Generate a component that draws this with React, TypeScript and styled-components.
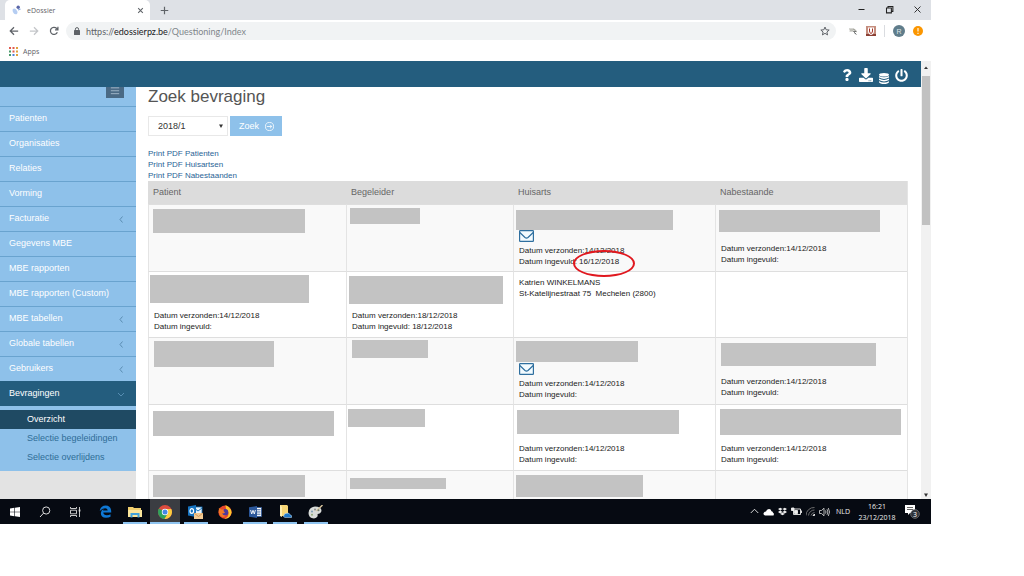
import React from "react";
import styled, { createGlobalStyle } from "styled-components";
import { FaDownload, FaPowerOff, FaQuestion, FaDropbox } from "react-icons/fa";

const GlobalStyle = createGlobalStyle`
  * { box-sizing: border-box; }
  body { margin: 0; background: #fff; font-family: "Liberation Sans", Arial, sans-serif; font-size: 8px; line-height: 11px; color: #333; }
  button, select, input { font: inherit; border: 0; padding: 0; margin: 0; background: none; color: inherit; }
  a { text-decoration: none; color: inherit; }
  ul { list-style: none; margin: 0; padding: 0; }
  svg { display: block; flex: none; }
`;

const ui = `"Open Sans", "Noto Sans", sans-serif`;

const Page = styled.div`
  height: 100vh;
  padding: 0 93px 52px 0;
`;
const Desktop = styled.div`
  height: 100%;
  display: flex;
  flex-direction: column;
  overflow: hidden;
`;

/* Browser chrome */
const TabStrip = styled.div`
  display: flex;
  align-items: stretch;
  height: 20px;
  flex: none;
  background: #dee1e6;
  font-family: ${ui};
  color: #5f6368;
`;
const Tab = styled.div`
  display: flex;
  align-items: center;
  gap: 5px;
  width: 145px;
  margin-left: 5px;
  padding: 0 6px 0 7px;
  border-radius: 5px 5px 0 0;
  background: #fff;
  font-size: 7px;
`;
const TabTitle = styled.span`
  flex: 1;
`;
const IconButton = styled.button`
  display: flex;
  align-items: center;
  justify-content: center;
  cursor: pointer;
`;
const NewTab = styled(IconButton)`
  width: 28px;
`;
const WindowButtons = styled.div`
  display: flex;
  margin-left: auto;
`;
const WindowButton = styled(IconButton)`
  width: 28px;
  padding-bottom: 2px;
  color: #222;
`;
const Toolbar = styled.div`
  display: flex;
  align-items: center;
  height: 22px;
  flex: none;
  padding: 0 8px 0 4px;
  background: #fff;
  color: #5f6368;
`;
const NavButton = styled(IconButton)`
  width: 20px;
  height: 20px;
`;
const AddressBar = styled.div`
  display: flex;
  align-items: center;
  flex: 1;
  gap: 6px;
  height: 18px;
  margin: 0 12px 0 2px;
  padding: 0 6px 0 8px;
  border-radius: 9px;
  background: #f1f3f4;
  font-family: Lato, ${ui};
  font-size: 9px;
`;
const Url = styled.span`
  flex: 1;
  color: #80868b;
`;
const Host = styled.span`
  color: #202124;
`;
const Scheme = styled.span`
  color: #5f6368;
`;
const Extensions = styled.div`
  display: flex;
  align-items: center;
  gap: 8px;
`;
const Divider = styled.span`
  width: 1px;
  height: 12px;
  background: #dadce0;
`;
const Avatar = styled(IconButton)`
  width: 12px;
  height: 12px;
  border-radius: 50%;
  background: #607d8b;
  color: #dfe6e9;
  font-size: 7px;
`;
const Bookmarks = styled.div`
  display: flex;
  align-items: center;
  height: 19px;
  flex: none;
  padding-left: 9px;
  background: #fff;
  color: #5f6368;
  font-family: ${ui};
  font-size: 7px;
`;
const Bookmark = styled.a`
  display: flex;
  align-items: center;
  gap: 5px;
`;

/* Web application */
const Viewport = styled.div`
  display: flex;
  flex: 1;
  min-height: 0;
`;
const Application = styled.div`
  display: flex;
  flex-direction: column;
  flex: 1;
  min-width: 0;
`;
const AppBar = styled.header`
  display: flex;
  align-items: center;
  justify-content: flex-end;
  gap: 6px;
  height: 26px;
  flex: none;
  padding: 2px 13px 0 0;
  background: #245d7e;
  color: #fff;
`;
const AppBody = styled.div`
  display: flex;
  flex: 1;
  min-height: 0;
  overflow: hidden;
`;
const SideColumn = styled.aside`
  width: 136px;
  flex: none;
  background: #e3e3e3;
`;
const Menu = styled.nav`
  background: #8ec1ea;
  padding-bottom: 4px;
  font-size: 9px;
`;
const MenuTop = styled.div`
  display: flex;
  justify-content: flex-end;
  height: 19px;
  padding-right: 12px;
`;
const MenuToggle = styled.button`
  display: flex;
  justify-content: center;
  width: 18px;
  height: 11px;
  background: #4a6a85;
  color: #9db3c5;
`;
const MenuLink = styled.a<{ $active?: boolean }>`
  display: flex;
  align-items: center;
  justify-content: space-between;
  height: 25px;
  padding: 0 10px 1px 9px;
  border-top: 1px solid ${(p) => (p.$active ? "#245d7e" : "#69a3cf")};
  background: ${(p) => (p.$active ? "#245d7e" : "transparent")};
  color: #fff;
`;
const SubMenu = styled.ul`
  padding-top: 4px;
`;
const SubLink = styled.a<{ $active?: boolean }>`
  display: flex;
  align-items: center;
  height: 19px;
  padding-left: 27px;
  background: ${(p) => (p.$active ? "#1f4a63" : "transparent")};
  color: ${(p) => (p.$active ? "#fff" : "#2f6d97")};
`;
const Main = styled.main`
  flex: 1;
  min-width: 0;
  padding: 0 13px 0 12px;
  background: #fff;
`;
const Title = styled.h1`
  margin: 0 0 9px;
  font-size: 17px;
  line-height: 20px;
  font-weight: normal;
  color: #555;
`;
const Filter = styled.form`
  display: flex;
  gap: 2px;
  height: 20px;
  margin-bottom: 12px;
`;
const SelectBox = styled.div`
  display: grid;
  align-items: center;
  width: 80px;
  border: 1px solid #e8e8e8;
  > * { grid-area: 1 / 1; }
  > svg { justify-self: end; margin-right: 4px; pointer-events: none; }
`;
const Select = styled.select`
  appearance: none;
  width: 100%;
  height: 18px;
  padding-left: 9px;
  font-size: 9px;
  color: #333;
`;
const SearchButton = styled.button`
  display: flex;
  align-items: center;
  justify-content: space-between;
  width: 52px;
  padding: 0 8px 0 9px;
  background: #8ec1ea;
  color: #fff;
  font-size: 9px;
`;
const PrintLinks = styled.div`
  display: flex;
  flex-direction: column;
  align-items: flex-start;
  color: #2a6496;
`;
const Table = styled.table`
  width: 100%;
  table-layout: fixed;
  border-collapse: separate;
  border-spacing: 0;
  border-right: 1px solid #e4e4e4;
`;
const Th = styled.th<{ $width: string }>`
  width: ${(p) => p.$width};
  height: 23px;
  padding: 0 5px;
  background: #dcdcdc;
  color: #666;
  text-align: left;
  font-size: 9px;
  font-weight: normal;
`;
const Row = styled.tr`
  height: 66px;
  &:nth-child(odd) { background: #f9f9f9; }
`;
const Td = styled.td`
  position: relative;
  padding: 5px 5px 4px;
  border-top: 1px solid #dedede;
  border-left: 1px solid #e4e4e4;
  vertical-align: top;
  color: #222;
`;
const Line = styled.div`
  height: 11px;
  white-space: pre;
`;
const MailLink = styled.a`
  display: block;
  height: 13px;
  margin: -2px 0 2px;
`;
const Redaction = styled.div<{ $box: Box }>`
  position: absolute;
  left: ${(p) => p.$box[0]}px;
  top: ${(p) => p.$box[1]}px;
  width: ${(p) => p.$box[2]}px;
  height: ${(p) => p.$box[3]}px;
  background: #c3c3c3;
`;
const Marker = styled.div`
  position: absolute;
  z-index: 1;
  left: 59px;
  top: 45px;
  width: 62px;
  height: 27px;
  border: 2px solid #e0181f;
  border-radius: 50%;
`;
const ScrollTrack = styled.div`
  display: flex;
  flex-direction: column;
  align-items: center;
  width: 10px;
  flex: none;
  background: #f1f1f1;
`;
const ScrollArrow = styled(IconButton)`
  width: 10px;
  height: 15px;
  padding-bottom: 2px;
`;
const LastScrollArrow = styled(ScrollArrow)`
  height: 9px;
  padding: 0;
`;
const ScrollThumb = styled.div`
  width: 8px;
  height: 34%;
  margin-bottom: auto;
  background: #c1c1c1;
`;

/* Windows taskbar */
const Taskbar = styled.footer`
  display: flex;
  align-items: stretch;
  height: 25px;
  flex: none;
  background: #060a12;
  color: #eee;
  font-family: ${ui};
  font-size: 7px;
`;
const TaskButton = styled.button<{ $open?: boolean; $focused?: boolean }>`
  display: flex;
  align-items: center;
  justify-content: center;
  width: 30px;
  background: ${(p) => (p.$focused ? "#3b3d42" : "transparent")};
  &::after {
    content: "";
    align-self: flex-end;
    width: ${(p) => (p.$focused ? "30px" : "24px")};
    height: 2px;
    margin-left: ${(p) => (p.$focused ? "-22px" : "-19px")};
    margin-right: ${(p) => (p.$focused ? "-8px" : "-5px")};
    background: ${(p) => (p.$open ? "#8fc4f0" : "transparent")};
  }
`;
const Tray = styled.div`
  display: flex;
  align-items: center;
  gap: 4px;
  margin-left: auto;
  padding-right: 11px;
`;
const Language = styled.span`
  margin: 0 4px 0 2px;
`;
const Clock = styled.time`
  width: 38px;
  margin-right: 5px;
  text-align: center;
`;

const Stroke = ({ d, size = 10, w = 1.2, color = "currentColor", box = 12 }: { d: string; size?: number; w?: number; color?: string; box?: number }) => (
  <svg width={size} height={size} viewBox={`0 0 ${box} ${box}`} fill="none" stroke={color} strokeWidth={w}>
    <path d={d} />
  </svg>
);

const Favicon = () => (
  <svg width="10" height="10" viewBox="0 0 10 10">
    <circle cx="6.2" cy="2.2" r="1.700" fill="#5a66a8" />
    <path d="M.8 4Q3 2.500 4.500 5Q6.500 7 5 9Q3 10 1.500 8Q0 6 .8 4Z" fill="#b5cdf2" />
    <path d="M6 5L8.500 4" stroke="#88a8e0" strokeWidth="1.200" />
  </svg>
);
const Lock = () => (
  <svg width="6" height="8" viewBox="0 0 6 8">
    <rect x="0" y="3" width="6" height="5" rx=".6" fill="#5f6368" />
    <path d="M1.400 3.500V2.200a1.600 1.600 0 0 1 3.200 0V3.500" fill="none" stroke="#5f6368" />
  </svg>
);
const Star = () => (
  <svg width="10" height="10" viewBox="0 0 24 24" fill="none" stroke="#5f6368" strokeWidth="2.400">
    <path d="M12 2.500l2.800 6.600 7.200.6-5.500 4.700 1.700 7L12 17.600l-6.200 3.800 1.700-7L2 9.700l7.200-.6z" />
  </svg>
);
const Hand = () => (
  <svg width="10" height="10" viewBox="0 0 10 10" fill="none" stroke="#a5a59c">
    <path d="M1 3H6L8.500 5M1.500 5H5L8 8M5 3L9 6M2 4H7" strokeWidth=".9" />
    <path d="M6 6.500L8.500 8.500M5.500 5.500H8" stroke="#55585a" strokeWidth=".8" />
  </svg>
);
const Shield = () => (
  <svg width="10" height="10" viewBox="0 0 10 10">
    <rect width="10" height="10" fill="#c58e7e" />
    <path d="M0 8H10V10H0Z" fill="#8c4034" />
    <path d="M2 1.500H8V5Q8 8 5 9Q2 8 2 5Z" fill="#fff" />
    <path d="M3.500 2.500V5Q3.500 7 5 7.500Q6.500 7 6.500 5V2.500" fill="none" stroke="#a33227" />
  </svg>
);
const Alert = () => (
  <svg width="10" height="10" viewBox="0 0 10 10">
    <circle cx="5" cy="5" r="5" fill="#fb9600" />
    <path d="M5 2V5.500M5 6.800V8" stroke="#fff" strokeWidth="1.100" />
  </svg>
);
const AppsGrid = () => {
  const colors = ["#e05a4e", "#e05a4e", "#e0a23a", "#4a9b6a", "#e05a4e", "#e0a23a", "#4a9b6a", "#4a80d8", "#e0a23a"];
  return (
    <svg width="9" height="9" viewBox="0 0 9 9">
      {colors.map((c, i) => (
        <rect key={i} x={(i % 3) * 3.5} y={Math.floor(i / 3) * 3.5} width="2" height="2" fill={c} />
      ))}
    </svg>
  );
};
const Database = () => (
  <svg width="10" height="17" viewBox="0 -6 10 17" fill="#fff">
    <ellipse cx="5" cy="1.800" rx="5" ry="1.800" />
    <path d="M0 3Q5 5.600 10 3V4.500Q5 7.400 0 4.500ZM0 5.600Q5 8.200 10 5.600V7Q5 9.800 0 7ZM0 8.200Q5 10.600 10 8.200V9.200Q9 11 5 11Q1 11 0 9.200Z" />
  </svg>
);
const Envelope = () => (
  <svg width="15" height="12" viewBox="0 0 15 12" fill="none" stroke="#2f6f9f" strokeWidth="1.200">
    <rect x=".6" y=".6" width="13.800" height="10.800" rx=".6" fill="#f3fbff" />
    <path d="M.8 2.500L6 7.500Q7.500 8.700 9 7.500L14.200 2.500" />
  </svg>
);
const ArrowCircle = () => (
  <svg width="9" height="9" viewBox="0 0 10 10" fill="none" stroke="#fff" strokeWidth=".9">
    <circle cx="5" cy="5" r="4.500" />
    <path d="M2 5H7.500M5.500 3L7.500 5L5.500 7" />
  </svg>
);
const Caret = ({ up }: { up?: boolean }) => (
  <svg width="4" height="4" viewBox="0 0 4 4">
    <path d={up ? "M0 3L2 .5L4 3Z" : "M0 .5H4L2 4Z"} fill="#333" />
  </svg>
);

const WindowsLogo = () => (
  <svg width="10" height="10" viewBox="0 0 10 10" fill="#fff">
    <path d="M0 1.400L4.400.8V4.700H0ZM5 .7L10 0V4.700H5ZM0 5.300H4.400V9.200L0 8.600ZM5 5.300H10V10L5 9.300Z" />
  </svg>
);
const SearchGlass = () => (
  <svg width="12" height="12" viewBox="0 0 12 12" fill="none" stroke="#ddd">
    <circle cx="7.200" cy="4.500" r="3.600" />
    <path d="M4.600 7.100L1 11" />
  </svg>
);
const TaskView = () => (
  <svg width="11" height="10" viewBox="0 0 11 10" fill="none" stroke="#ddd" strokeWidth=".9">
    <path d="M.5 0V1.500H6.500V0M.5 10V8.500H6.500V10M.5 3.200H6.500V6.800H.5ZM9.500 0V10" />
    <path d="M8.700 3.500H10.400" strokeWidth="2" />
  </svg>
);
const Edge = () => (
  <svg width="13" height="13" viewBox="0 0 13 13">
    <path d="M.8 6Q1.500 .5 6.800 .5Q12.300 .8 12.300 7.500H4.300Q4.600 10.300 7.800 10.300Q10 10.300 11.500 9.300V11.700Q9.800 12.800 7 12.800Q1.800 12.500 1.800 8Q2 5 4.800 3.700Q4 4.500 4 5.600H8.700Q8.600 3.200 6.200 3.200Q3 3.200 .8 6Z" fill="#0f78d4" />
  </svg>
);
const Folder = () => (
  <svg width="14" height="12" viewBox="0 0 14 12">
    <path d="M0 1H5L6 2H13V11H0Z" fill="#f1cf6e" />
    <path d="M0 4H14V11H0Z" fill="#fbe69c" />
    <path d="M2.500 11.500V7H11.500V11.500H9.500V9H4.500V11.500Z" fill="#41a3dc" />
  </svg>
);
const Chrome = () => (
  <svg width="14" height="14" viewBox="0 0 14 14">
    <circle cx="7" cy="7" r="7" fill="#dd4b3e" />
    <path d="M7 7L.9 3.600A7 7 0 0 0 6.500 14L10 8.500Z" fill="#2da25b" />
    <path d="M7 4H13.300A7 7 0 0 1 6.500 14L9.700 8.500Z" fill="#fbcd3f" />
    <circle cx="7" cy="7" r="3.200" fill="#fff" />
    <circle cx="7" cy="7" r="2.500" fill="#4587e6" />
  </svg>
);
const Outlook = () => (
  <svg width="15" height="14" viewBox="0 0 15 14">
    <rect x="6" y="2" width="8" height="7" fill="#e9f3fb" stroke="#1976bd" strokeWidth=".8" />
    <path d="M6 3L10 6L14 3" fill="none" stroke="#1976bd" />
    <path d="M0 1.500L8 0V12L0 10.500Z" fill="#1573c0" />
    <ellipse cx="3.800" cy="6" rx="1.800" ry="2.300" fill="none" stroke="#fff" strokeWidth="1.200" />
    <path d="M6 8H15V14H6Z" fill="#f3ca92" />
    <path d="M6 8L10.500 11.500L15 8" fill="none" stroke="#c88a4c" strokeWidth=".8" />
  </svg>
);
const Firefox = () => (
  <svg width="14" height="14" viewBox="0 0 14 14">
    <circle cx="7" cy="7.200" r="6.600" fill="#e8452c" />
    <path d="M7.500 0Q14 3 13.500 8Q12 14 6.500 13.600Q11 12 10.500 8Q10 5 8 4Z" fill="#ffc52e" />
    <circle cx="7" cy="7.300" r="3.300" fill="#503a9c" />
    <path d="M1 3L3.500 4.500L6 4.200L5.500 6L7 7.500Q5.500 9 3.800 8.300Q5 11 8.500 10.600Q5 13.500 2 10.500Q0 7 1 3Z" fill="#f47a25" />
  </svg>
);
const Word = () => (
  <svg width="13" height="12" viewBox="0 0 13 12">
    <path d="M6 1.500H12.500V10.500H6Z" fill="#fff" stroke="#2b579a" strokeWidth=".8" />
    <path d="M8 3.500H11.500M8 5.200H11.500M8 6.900H11.500M8 8.600H11.500" stroke="#2b579a" strokeWidth=".7" />
    <path d="M0 1.300L8 0V12L0 10.700Z" fill="#2b579a" />
    <path d="M1.600 4L2.700 8L4 4.300L5.300 8L6.400 4" fill="none" stroke="#fff" strokeWidth=".9" />
  </svg>
);
const CloudFolder = () => (
  <svg width="13" height="13" viewBox="0 0 13 13">
    <path d="M1 0H8L9 1V11H1Z" fill="#f7d676" />
    <path d="M1 0L3 2V12L1 11Z" fill="#fdeeb0" />
    <path d="M6 12.500Q3.500 12 5 10Q5.500 8 8 8.300Q10.500 7.500 11 9.800Q13.500 10.300 12.500 12.500Z" fill="#1f78c8" stroke="#cfe6f8" strokeWidth=".5" />
  </svg>
);
const Paint = () => (
  <svg width="15" height="14" viewBox="0 0 15 14">
    <path d="M.5 8Q.5 2.500 7 1.500Q13.500 1.500 13.500 6Q12.500 9 9.500 9Q10.500 12.500 6 13.500Q.5 13 .5 8Z" fill="#d9dcd9" />
    <path d="M14.500 0L8.500 6" stroke="#d9c49c" strokeWidth="1.400" />
    <circle cx="4" cy="6.500" r="1" fill="#7b9cb5" />
    <circle cx="7" cy="4.500" r="1" fill="#8b8b8b" />
    <circle cx="4" cy="9.800" r="1" fill="#8fa877" />
    <circle cx="10.500" cy="5.200" r="1" fill="#6f7f73" />
  </svg>
);
const CloudTray = () => (
  <svg width="11" height="8" viewBox="0 0 11 8" fill="#fff">
    <path d="M2 7.500Q-.5 6.500 1 4.500Q1.600 3.500 3 3.500Q3.500 1 6 1Q8 1 8.500 3.200Q10 3.200 10 4.700Q11.500 5.500 10.500 7.500Z" />
  </svg>
);
const Battery = () => (
  <svg width="11" height="9" viewBox="0 0 11 9" fill="none" stroke="#eee" strokeWidth=".9">
    <path d="M2.500 2H9.500V7.500H2.500ZM10.500 3.500V6" />
    <path d="M.5 1H3V3.500H.5ZM3.500 3.500H6.500V6.500H3.500Z" fill="#eee" />
  </svg>
);
const Wifi = () => (
  <svg width="9" height="9" viewBox="0 0 9 9" fill="none" stroke="#777" strokeWidth=".9">
    <path d="M0 8.500A8 8 0 0 1 8.500 .5M2.500 8.500A6 6 0 0 1 8.500 3M5 8.500A4 4 0 0 1 8.500 5.500" />
    <path d="M7 8.500L8.500 7V8.500Z" fill="#eee" stroke="#eee" />
  </svg>
);
const Speaker = () => (
  <svg width="11" height="10" viewBox="0 0 11 10" fill="none" stroke="#ddd" strokeWidth=".8">
    <path d="M.5 3.500H2.500L5 1.200V8.800L2.500 6.500H.5ZM6.500 3.500Q7.500 5 6.500 6.500M8 2.200Q9.800 5 8 7.800M9.300 1Q11.800 5 9.300 9" />
  </svg>
);
const Notifications = () => (
  <svg width="15" height="15" viewBox="0 0 15 15">
    <path d="M0 1H10V9H5L3 11V9H0Z" fill="#fff" />
    <path d="M2 3.500H8M2 5.500H8" stroke="#222" strokeWidth=".7" />
    <circle cx="10" cy="10" r="4.400" fill="#30343a" stroke="#888" strokeWidth=".6" />
    <text x="10" y="12.500" fontSize="7" textAnchor="middle" fill="#fff">3</text>
  </svg>
);

type Box = [number, number, number, number];
interface CellData {
  box?: Box;
  hidden?: number;
  mail?: boolean;
  lines?: string[];
  marked?: boolean;
}

const sent = "Datum verzonden:14/12/2018";
const filled = "Datum ingevuld:";

const rows: CellData[][] = [
  [
    { box: [4, 4, 152, 24] },
    { box: [3, 3, 70, 16] },
    { box: [2, 5, 157, 20], hidden: 2, mail: true, lines: [sent, "Datum ingevuld: 16/12/2018"], marked: true },
    { box: [3, 5, 161, 22], hidden: 3, lines: [sent, filled] },
  ],
  [
    { box: [1, 3, 159, 28], hidden: 3, lines: [sent, filled] },
    { box: [2, 4, 154, 28], hidden: 3, lines: ["Datum verzonden:18/12/2018", "Datum ingevuld: 18/12/2018"] },
    { lines: ["Katrien WINKELMANS", "St-Katelijnestraat 75  Mechelen (2800)"] },
    {},
  ],
  [
    { box: [5, 3, 120, 26] },
    { box: [5, 2, 76, 18] },
    { box: [2, 3, 122, 21], hidden: 2, mail: true, lines: [sent, filled] },
    { box: [5, 5, 155, 23], hidden: 3, lines: [sent, filled] },
  ],
  [
    { box: [4, 6, 181, 25] },
    { box: [1, 4, 77, 18] },
    { box: [3, 5, 162, 24], hidden: 3, lines: [sent, filled] },
    { box: [4, 4, 181, 26], hidden: 3, lines: [sent, filled] },
  ],
  [
    { box: [4, 4, 152, 22] },
    { box: [3, 7, 96, 11] },
    { box: [2, 4, 127, 22] },
    {},
  ],
];

const Cell = ({ data }: { data: CellData }) => (
  <Td>
    {Array.from({ length: data.hidden ?? 0 }, (_, i) => (
      <Line key={i} />
    ))}
    {data.mail && (
      <MailLink href="#mail" aria-label="E-mail">
        <Envelope />
      </MailLink>
    )}
    {data.lines?.map((l) => (
      <Line key={l}>{l}</Line>
    ))}
    {data.box && <Redaction $box={data.box} />}
    {data.marked && <Marker />}
  </Td>
);

const menu: { label: string; nested?: boolean }[] = [
  { label: "Patienten" },
  { label: "Organisaties" },
  { label: "Relaties" },
  { label: "Vorming" },
  { label: "Facturatie", nested: true },
  { label: "Gegevens MBE" },
  { label: "MBE rapporten" },
  { label: "MBE rapporten (Custom)" },
  { label: "MBE tabellen", nested: true },
  { label: "Globale tabellen", nested: true },
  { label: "Gebruikers", nested: true },
];

const columns = [
  ["Patient", "26.1%"],
  ["Begeleider", "22%"],
  ["Huisarts", "26.6%"],
  ["Nabestaande", "25.3%"],
];

export default function App() {
  return (
    <Page>
      <GlobalStyle />
      <Desktop>
        <TabStrip>
          <Tab>
            <Favicon />
            <TabTitle>eDossier</TabTitle>
            <IconButton aria-label="Close tab">
              <Stroke d="M2 2L10 10M10 2L2 10" size={7} w={1.8} />
            </IconButton>
          </Tab>
          <NewTab aria-label="New tab">
            <Stroke d="M6 1V11M1 6H11" size={9} w={1.6} />
          </NewTab>
          <WindowButtons>
            <WindowButton aria-label="Minimize">
              <Stroke d="M2 6H10" size={9} w={1.4} />
            </WindowButton>
            <WindowButton aria-label="Restore">
              <Stroke d="M2 4H8.500V10.500H2ZM4 4V2H10.500V8.500H8.500" size={9} w={1.4} />
            </WindowButton>
            <WindowButton aria-label="Close">
              <Stroke d="M2 2L10 10M10 2L2 10" size={9} />
            </WindowButton>
          </WindowButtons>
        </TabStrip>
        <Toolbar>
          <NavButton aria-label="Back">
            <Stroke d="M11 6H2M6 1.500L1.500 6L6 10.500" w={1.5} />
          </NavButton>
          <NavButton aria-label="Forward">
            <Stroke d="M1 6H10M6 1.500L10.500 6L6 10.500" color="#c4c6c9" w={1.5} />
          </NavButton>
          <NavButton aria-label="Reload">
            <Stroke d="M10 7.500A4.300 4.300 0 1 1 9 2.700L10.500 4.200M10.700 1V4.500H7.200" w={1.5} />
          </NavButton>
          <AddressBar>
            <Lock />
            <Url>
              <Scheme>https://</Scheme>
              <Host>edossierpz.be</Host>/Questioning/Index
            </Url>
            <Star />
          </AddressBar>
          <Extensions>
            <Hand />
            <Shield />
            <Divider />
            <Avatar aria-label="Profile">R</Avatar>
            <Alert />
          </Extensions>
        </Toolbar>
        <Bookmarks>
          <Bookmark href="#apps">
            <AppsGrid />
            Apps
          </Bookmark>
        </Bookmarks>

        <Viewport>
          <Application>
            <AppBar>
              <IconButton aria-label="Help"><FaQuestion size={12} /></IconButton>
              <IconButton aria-label="Download"><FaDownload size={14} /></IconButton>
              <IconButton aria-label="Database"><Database /></IconButton>
              <IconButton aria-label="Logout"><FaPowerOff size={13} /></IconButton>
            </AppBar>
            <AppBody>
              <SideColumn>
                <Menu>
                  <MenuTop>
                    <MenuToggle aria-label="Menu">
                      <Stroke d="M1 1H11M1 4.500H11M1 8H11" size={10} />
                    </MenuToggle>
                  </MenuTop>
                  {menu.map((m) => (
                    <MenuLink key={m.label} href="#menu">
                      {m.label}
                      {m.nested && <Stroke d="M4.500 1.500L2 4.500L4.500 7.500" box={8} size={8} w={0.9} color="#5587ab" />}
                    </MenuLink>
                  ))}
                  <MenuLink href="#bevragingen" $active>
                    Bevragingen
                    <Stroke d="M0 3L3 6L6 3" box={8} size={8} w={0.9} color="#5c93b8" />
                  </MenuLink>
                  <SubMenu>
                    <li><SubLink href="#overzicht" $active>Overzicht</SubLink></li>
                    <li><SubLink href="#begeleidingen">Selectie begeleidingen</SubLink></li>
                    <li><SubLink href="#overlijdens">Selectie overlijdens</SubLink></li>
                  </SubMenu>
                </Menu>
              </SideColumn>
              <Main>
                <Title>Zoek bevraging</Title>
                <Filter onSubmit={(e) => e.preventDefault()}>
                  <SelectBox>
                    <Select aria-label="Periode" defaultValue="2018/1">
                      <option>2018/1</option>
                    </Select>
                    <Caret />
                  </SelectBox>
                  <SearchButton type="submit">
                    Zoek
                    <ArrowCircle />
                  </SearchButton>
                </Filter>
                <PrintLinks>
                  <a href="#patienten">Print PDF Patienten</a>
                  <a href="#huisartsen">Print PDF Huisartsen</a>
                  <a href="#nabestaanden">Print PDF Nabestaanden</a>
                </PrintLinks>
                <Table>
                  <thead>
                    <tr>
                      {columns.map(([label, width]) => (
                        <Th key={label} $width={width}>{label}</Th>
                      ))}
                    </tr>
                  </thead>
                  <tbody>
                    {rows.map((cells, i) => (
                      <Row key={i}>
                        {cells.map((c, j) => (
                          <Cell key={j} data={c} />
                        ))}
                      </Row>
                    ))}
                  </tbody>
                </Table>
              </Main>
            </AppBody>
          </Application>
          <ScrollTrack>
            <ScrollArrow aria-label="Scroll up"><Caret up /></ScrollArrow>
            <ScrollThumb />
            <LastScrollArrow aria-label="Scroll down"><Caret /></LastScrollArrow>
          </ScrollTrack>
        </Viewport>

        <Taskbar>
          <TaskButton aria-label="Start"><WindowsLogo /></TaskButton>
          <TaskButton aria-label="Search"><SearchGlass /></TaskButton>
          <TaskButton aria-label="Task view"><TaskView /></TaskButton>
          <TaskButton aria-label="Edge"><Edge /></TaskButton>
          <TaskButton aria-label="Explorer" $open><Folder /></TaskButton>
          <TaskButton aria-label="Chrome" $open $focused><Chrome /></TaskButton>
          <TaskButton aria-label="Outlook" $open><Outlook /></TaskButton>
          <TaskButton aria-label="Firefox"><Firefox /></TaskButton>
          <TaskButton aria-label="Word" $open><Word /></TaskButton>
          <TaskButton aria-label="OneDrive folder" $open><CloudFolder /></TaskButton>
          <TaskButton aria-label="Paint" $open><Paint /></TaskButton>
          <Tray>
            <Stroke d="M1 8L6 3L11 8" size={9} />
            <CloudTray />
            <FaDropbox size={9} />
            <Battery />
            <Wifi />
            <Speaker />
            <Language>NLD</Language>
            <Clock>16:21<br />23/12/2018</Clock>
            <IconButton aria-label="Notifications"><Notifications /></IconButton>
          </Tray>
        </Taskbar>
      </Desktop>
    </Page>
  );
}
